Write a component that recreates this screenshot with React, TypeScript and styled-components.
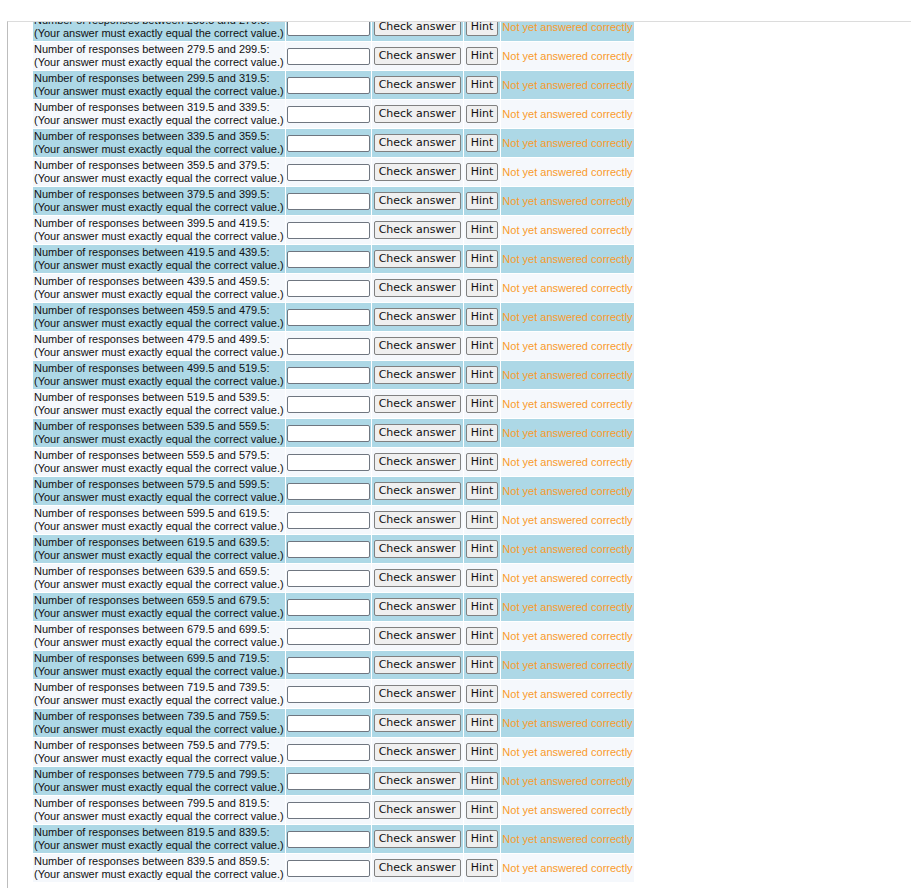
import { createGlobalStyle } from 'styled-components';
import styled from 'styled-components';

const GlobalStyle = createGlobalStyle`
    html, body {
        margin: 0;
        padding: 0;
        background: #ffffff;
        overflow: hidden;
    }
`;

const Frame = styled.div`
    margin: 21px 0 0 7px;
    height: 867px;
    border-top: 1px solid #dcdcdc;
    border-left: 1px solid #bdbdbd;
    padding-left: 24px;
    overflow: hidden;
`;

const Table = styled.table`
    margin-top: -10px;
    border-collapse: separate;
    border-spacing: 1px;
    font-family: 'Liberation Sans', Arial, sans-serif;
    font-size: 11px;
`;

const Row = styled.tr<{ $shaded: boolean }>`
    height: 28px;

    td {
        background: ${(p) => (p.$shaded ? '#add8e6' : '#f5f8fc')};
        padding: 0 1px;
        vertical-align: middle;
    }
`;

const Label = styled.td`
    color: #111;
    line-height: 13px;
    white-space: nowrap;
`;

const Answer = styled.input`
    box-sizing: border-box;
    width: 83px;
    height: 17px;
    margin: 0;
    border: 1px solid #6f7680;
    border-radius: 2px;
    background: #fff;
    display: block;
`;

const Button = styled.button`
    font-family: 'DejaVu Sans', Tahoma, sans-serif;
    font-size: 11px;
    color: #111;
    background: #efefef;
    border: 1px solid #808080;
    border-radius: 2px;
    padding: 1px 4px;
    margin: 0 1px;
    height: 18px;
    line-height: 14px;
    display: block;
`;

const Status = styled.td`
    color: #f99b2c;
    white-space: nowrap;
`;

const bins = Array.from({ length: 30 }, (_, i) => 259.5 + i * 20);

export default function App() {
    return (
        <>
            <GlobalStyle />
            <Frame>
                <Table>
                    <tbody>
                        {bins.map((lo, i) => (
                            <Row key={lo} $shaded={i % 2 === 0}>
                                <Label>
                                    Number of responses between {lo.toFixed(1)} and {(lo + 20).toFixed(1)}:
                                    <br />
                                    (Your answer must exactly equal the correct value.)
                                </Label>
                                <td>
                                    <Answer type="text" />
                                </td>
                                <td>
                                    <Button>Check answer</Button>
                                </td>
                                <td>
                                    <Button>Hint</Button>
                                </td>
                                <Status>Not yet answered correctly</Status>
                            </Row>
                        ))}
                    </tbody>
                </Table>
            </Frame>
        </>
    );
}
